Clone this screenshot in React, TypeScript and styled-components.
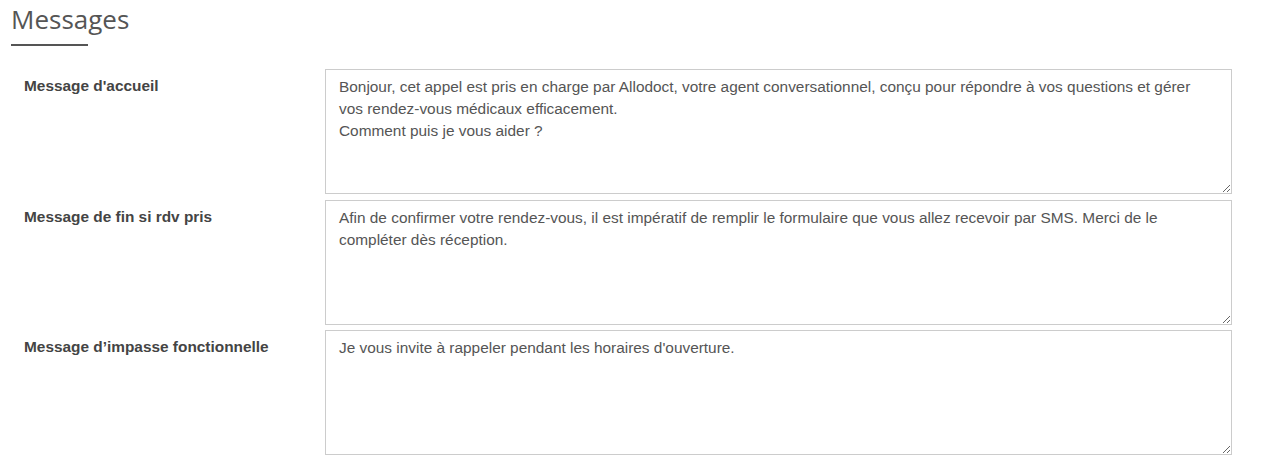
import styled, { createGlobalStyle } from 'styled-components';

const GlobalStyle = createGlobalStyle`
  body {
    margin: 0;
    background: #fff;
    font-family: "Liberation Sans", Arial, sans-serif;
  }
`;

type MessageField = {
  label: string;
  value: string;
};

const fields: MessageField[] = [
  {
    label: "Message d'accueil",
    value:
      "Bonjour, cet appel est pris en charge par Allodoct, votre agent conversationnel, conçu pour répondre à vos questions et gérer\nvos rendez-vous médicaux efficacement.\nComment puis je vous aider ?",
  },
  {
    label: 'Message de fin si rdv pris',
    value:
      'Afin de confirmer votre rendez-vous, il est impératif de remplir le formulaire que vous allez recevoir par SMS. Merci de le\ncompléter dès réception.',
  },
  {
    label: 'Message d’impasse fonctionnelle',
    value: "Je vous invite à rappeler pendant les horaires d'ouverture.",
  },
];

export default function App() {
  return (
    <Page>
      <GlobalStyle />
      <Header>
        <Title>Messages</Title>
        <Underline />
      </Header>
      <Form>
        {fields.map((field) => (
          <Row key={field.label}>
            <Label>{field.label}</Label>
            <TextArea defaultValue={field.value} />
          </Row>
        ))}
      </Form>
    </Page>
  );
}

const Page = styled.div`
  padding: 0 29px 0 11px;
`;

const Header = styled.div`
  padding-top: 2px;
`;

const Title = styled.h2`
  margin: 0;
  font-family: "Open Sans", sans-serif;
  font-weight: 400;
  font-size: 26px;
  line-height: 34px;
  color: #555;
`;

const Underline = styled.div`
  width: 77px;
  height: 2px;
  margin-top: 8px;
  background: #555;
`;

const Form = styled.div`
  display: flex;
  flex-direction: column;
  gap: 5.5px;
  margin-top: 23px;
  padding-left: 13px;
`;

const Row = styled.div`
  display: flex;
  align-items: flex-start;
`;

const Label = styled.label`
  width: 301px;
  flex-shrink: 0;
  padding-top: 7px;
  font-size: 15.4px;
  line-height: 20px;
  font-weight: 700;
  color: #444;
`;

const TextArea = styled.textarea`
  flex: 1;
  box-sizing: border-box;
  height: 125px;
  margin: 0;
  padding: 6px 10px 6px 13px;
  border: 1px solid #ccc;
  border-radius: 0;
  font-family: "Liberation Sans", Arial, sans-serif;
  font-size: 15.4px;
  line-height: 22px;
  color: #555;
  background: #fff;
  outline: none;
`;
